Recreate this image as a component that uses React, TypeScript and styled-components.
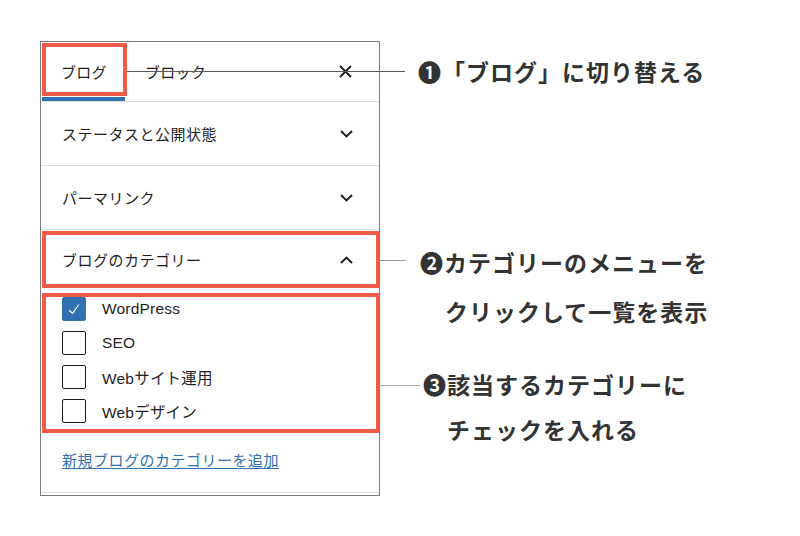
import styled, { createGlobalStyle } from "styled-components";

const RED = "#ef5a4b";
const BLUE = "#3071b3";
const LINE = "#e0e0e0";

const GlobalStyle = createGlobalStyle`
  html, body {
    margin: 0;
    background: #fff;
  }
  body {
    font-family: "Liberation Sans", "Noto Sans CJK JP", sans-serif;
    color: #1e1e1e;
  }
`;

const categories = [
  { label: "WordPress", checked: true },
  { label: "SEO", checked: false },
  { label: "Webサイト運用", checked: false },
  { label: "Webデザイン", checked: false },
];

function Chevron({ up }: { up?: boolean }) {
  return (
    <svg width="13" height="8" viewBox="0 0 13 8">
      <polyline
        points={up ? "1,7 6.5,1.6 12,7" : "1,1 6.5,6.4 12,1"}
        fill="none"
        stroke="#1e1e1e"
        strokeWidth="2"
      />
    </svg>
  );
}

function CloseIcon() {
  return (
    <svg width="13" height="13" viewBox="0 0 13 13">
      <path d="M1 1L12 12M12 1L1 12" stroke="#1e1e1e" strokeWidth="1.8" fill="none" />
    </svg>
  );
}

function CheckIcon() {
  return (
    <svg width="24" height="24" viewBox="0 0 24 24">
      <path d="M16.7 7.1l-6.3 8.5-3.3-2.5-.9 1.2 4.5 3.4L17.9 7z" fill="#fff" />
    </svg>
  );
}

export default function App() {
  return (
    <Stage>
      <GlobalStyle />
      <Panel>
        <TabBar>
          <Tab $active $marked>ブログ</Tab>
          <Tab>ブロック</Tab>
          <CloseButton>
            <CloseIcon />
          </CloseButton>
        </TabBar>

        <PanelRow>
          <RowTitle>ステータスと公開状態</RowTitle>
          <Chevron />
        </PanelRow>
        <PanelRow>
          <RowTitle>パーマリンク</RowTitle>
          <Chevron />
        </PanelRow>

        <CategorySection>
          <CategoryHeader>
            <RowTitle>ブログのカテゴリー</RowTitle>
            <Chevron up />
          </CategoryHeader>
          <CheckList>
            {categories.map((c) => (
              <CheckRow key={c.label}>
                <CheckBox $checked={c.checked}>{c.checked && <CheckIcon />}</CheckBox>
                <CheckLabel>{c.label}</CheckLabel>
              </CheckRow>
            ))}
          </CheckList>
          <LinkRow>
            <AddLink href="#">新規ブログのカテゴリーを追加</AddLink>
          </LinkRow>
        </CategorySection>
      </Panel>

      <Callout $top={48} $left={127}>
        <Leader $width={278} $offset={23} $gap={13} $tone="#5a5a5a" />
        <Note $lh={46}>
          <NoteLine>❶「ブログ」に切り替える</NoteLine>
        </Note>
      </Callout>

      <Callout $top={238} $left={379}>
        <Leader $width={27} $offset={22} $gap={14} $tone="#9a9a9a" />
        <Note $lh={49}>
          <NoteLine>❷カテゴリーのメニューを</NoteLine>
          <NoteLine $indent={25}>クリックして一覧を表示</NoteLine>
        </Note>
      </Callout>

      <Callout $top={362} $left={379}>
        <Leader $width={41} $offset={23} $gap={3} $tone="#a5a5a5" />
        <Note $lh={45}>
          <NoteLine>❸該当するカテゴリーに</NoteLine>
          <NoteLine $indent={24}>チェックを入れる</NoteLine>
        </Note>
      </Callout>
    </Stage>
  );
}

const Stage = styled.div`
  position: relative;
  width: 800px;
  height: 536px;
  padding: 41px 0 0 40px;
  box-sizing: border-box;
  overflow: hidden;
`;

const Panel = styled.div`
  width: 340px;
  height: 455px;
  border: 1px solid #7c7c7c;
  box-sizing: border-box;
  display: flex;
  flex-direction: column;
  overflow: hidden;
  background: #fff;
`;

const TabBar = styled.div`
  flex: none;
  display: flex;
  align-items: stretch;
  height: 60px;
  border-bottom: 1px solid ${LINE};
  box-sizing: border-box;
`;

const Tab = styled.div<{ $active?: boolean; $marked?: boolean }>`
  position: relative;
  display: flex;
  align-items: center;
  padding: 0 18px 0 20px;
  font-size: 15px;
  letter-spacing: 0.3px;

  &::after {
    content: "";
    display: ${({ $active }) => ($active ? "block" : "none")};
    position: absolute;
    left: 1px;
    right: 0;
    bottom: 0;
    height: 4px;
    background: ${BLUE};
  }

  &::before {
    content: "";
    display: ${({ $marked }) => ($marked ? "block" : "none")};
    position: absolute;
    top: 1px;
    left: 1px;
    right: -2px;
    bottom: 5px;
    border: 4px solid ${RED};
  }
`;

const CloseButton = styled.div`
  margin-left: auto;
  margin-right: 27px;
  display: flex;
  align-items: center;
`;

const PanelRow = styled.div`
  flex: none;
  display: flex;
  align-items: center;
  justify-content: space-between;
  height: 64px;
  padding: 0 26px 0 21px;
  border-bottom: 1px solid ${LINE};
  box-sizing: border-box;
`;

const RowTitle = styled.span`
  font-size: 15px;
  letter-spacing: 0.5px;
`;

const CategorySection = styled.div`
  flex: none;
  display: flex;
  flex-direction: column;
  border-bottom: 1px solid ${LINE};
`;

const CategoryHeader = styled.div`
  position: relative;
  display: flex;
  align-items: center;
  justify-content: space-between;
  height: 59px;
  padding: 0 26px 0 21px;

  &::before {
    content: "";
    position: absolute;
    top: 1px;
    left: 1px;
    right: -1px;
    bottom: 1px;
    border: 4px solid ${RED};
  }
`;

const CheckList = styled.div`
  position: relative;
  display: flex;
  flex-direction: column;
  gap: 10px;
  padding: 8px 0 12px 21px;

  &::before {
    content: "";
    position: absolute;
    top: 4px;
    left: 1px;
    right: -1px;
    bottom: 2px;
    border: 4px solid ${RED};
  }
`;

const CheckRow = styled.div`
  display: flex;
  align-items: center;
  gap: 16px;
  height: 24px;
`;

const CheckBox = styled.span<{ $checked: boolean }>`
  width: 24px;
  height: 24px;
  box-sizing: border-box;
  border-radius: 2px;
  border: 1px solid ${({ $checked }) => ($checked ? BLUE : "#1e1e1e")};
  background: ${({ $checked }) => ($checked ? BLUE : "#fff")};
  display: flex;
  align-items: center;
  justify-content: center;
`;

const CheckLabel = styled.span`
  font-size: 15.5px;
  letter-spacing: 0.2px;
`;

const LinkRow = styled.div`
  padding: 16px 21px 21px;
  line-height: 20px;
`;

const AddLink = styled.a`
  font-size: 15px;
  letter-spacing: 0.5px;
  color: ${BLUE};
  text-decoration: underline;
  text-underline-offset: 2px;
`;

const Callout = styled.div<{ $top: number; $left: number }>`
  position: absolute;
  top: ${({ $top }) => $top}px;
  left: ${({ $left }) => $left}px;
  display: flex;
  align-items: flex-start;
  z-index: 2;
`;

const Leader = styled.span<{ $width: number; $offset: number; $gap: number; $tone: string }>`
  flex: none;
  width: ${({ $width }) => $width}px;
  height: 1px;
  margin-top: ${({ $offset }) => $offset}px;
  margin-right: ${({ $gap }) => $gap}px;
  background: ${({ $tone }) => $tone};
`;

const Note = styled.div<{ $lh: number }>`
  font-family: "Noto Sans CJK JP", sans-serif;
  font-weight: 700;
  font-size: 23px;
  letter-spacing: 1px;
  line-height: ${({ $lh }) => $lh}px;
  color: #333;
  white-space: nowrap;
`;

const NoteLine = styled.div<{ $indent?: number }>`
  padding-left: ${({ $indent = 0 }) => $indent}px;
`;
